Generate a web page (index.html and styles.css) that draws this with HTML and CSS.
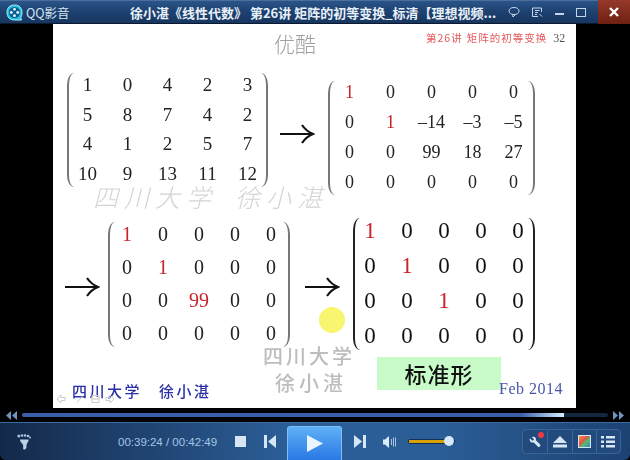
FILE: index.html
```html
<!DOCTYPE html>
<html lang="zh-CN">
<head>
    <meta charset="UTF-8">
    <title>QQ影音</title>
    <link rel="stylesheet" href="styles.css">
</head>
<body>

<div class="player">

    <!-- Title bar -->
    <header class="titlebar">
        <div class="brand">
            <svg class="logo" width="17" height="17" viewBox="0 0 17 17">
                <path d="M8.500 1C3.500 1 1 4 1 8.500S3.500 16 8.500 16H15.500L14.800 13.500C15.700 12 16 10.500 16 8.500 16 4 13.500 1 8.500 1Z" fill="#1fc0e0" stroke="#a8ecf8"/>
                <circle cx="8.500" cy="8.500" r="5.500" fill="#0a5a90"/>
                <circle cx="8.500" cy="5.300" r="1.400" fill="#e6fbff"/>
                <circle cx="8.500" cy="11.700" r="1.400" fill="#e6fbff"/>
                <circle cx="5.300" cy="8.500" r="1.400" fill="#e6fbff"/>
                <circle cx="11.700" cy="8.500" r="1.400" fill="#e6fbff"/>
            </svg>
            <span>QQ影音</span>
        </div>
        <div class="title">徐小湛《线性代数》 第26讲 矩阵的初等变换_标清【理想视频...</div>
        <div class="winbtns">
            <svg width="14" height="14" viewBox="0 0 14 14"><path d="M7 2.500C3.800 2.500 2 4 2 6S3.800 9.500 7 9.500 12 8 12 6 10.200 2.500 7 2.500ZM5.500 9.500 6 12 8.500 9.500" fill="none" stroke="#c4d6ea"/></svg>
            <svg width="14" height="14" viewBox="0 0 14 14"><path d="M2.500 3H11.500V7M2.500 3V11.500H8M5 5.500H9.500M5 7.500H8M5 9.500H7M9.500 9 12 11.500" fill="none" stroke="#c4d6ea"/></svg>
            <span class="btn-min"></span>
            <span class="btn-max"></span>
            <span class="btn-close">
                <svg width="12" height="12" viewBox="0 0 12 12"><path d="M2 2 10 10M10 2 2 10" stroke="#fff" stroke-width="2.400"/></svg>
            </span>
        </div>
    </header>

    <!-- Video frame -->
    <main class="video">
        <div class="slide">
            <div class="youku">优酷</div>
            <div class="page-head"><span>第26讲</span><span>矩阵的初等变换</span><b>32</b></div>

            <div class="matrix m1">
                <span>1</span><span>0</span><span>4</span><span>2</span><span>3</span>
                <span>5</span><span>8</span><span>7</span><span>4</span><span>2</span>
                <span>4</span><span>1</span><span>2</span><span>5</span><span>7</span>
                <span>10</span><span>9</span><span>13</span><span>11</span><span>12</span>
            </div>

            <svg class="arrow a1" width="36" height="24" viewBox="0 0 36 24"><path d="M1 12H34M23 3Q27 9 34 12 27 15 23 21" fill="none" stroke="#111" stroke-width="2.200"/></svg>

            <div class="matrix m2">
                <span class="red">1</span><span>0</span><span>0</span><span>0</span><span>0</span>
                <span>0</span><span class="red">1</span><span>–14</span><span>–3</span><span>–5</span>
                <span>0</span><span>0</span><span>99</span><span>18</span><span>27</span>
                <span>0</span><span>0</span><span>0</span><span>0</span><span>0</span>
            </div>

            <div class="mark mark-wide"><span>四川大学</span><span>徐小湛</span></div>

            <svg class="arrow a2" width="36" height="24" viewBox="0 0 36 24"><path d="M1 12H34M23 3Q27 9 34 12 27 15 23 21" fill="none" stroke="#111" stroke-width="2.200"/></svg>

            <div class="matrix m3">
                <span class="red">1</span><span>0</span><span>0</span><span>0</span><span>0</span>
                <span>0</span><span class="red">1</span><span>0</span><span>0</span><span>0</span>
                <span>0</span><span>0</span><span class="red">99</span><span>0</span><span>0</span>
                <span>0</span><span>0</span><span>0</span><span>0</span><span>0</span>
            </div>

            <svg class="arrow a3" width="36" height="24" viewBox="0 0 36 24"><path d="M1 12H34M23 3Q27 9 34 12 27 15 23 21" fill="none" stroke="#111" stroke-width="2.200"/></svg>

            <div class="cursor-dot"></div>

            <div class="matrix m4">
                <span class="red">1</span><span>0</span><span>0</span><span>0</span><span>0</span>
                <span>0</span><span class="red">1</span><span>0</span><span>0</span><span>0</span>
                <span>0</span><span>0</span><span class="red">1</span><span>0</span><span>0</span>
                <span>0</span><span>0</span><span>0</span><span>0</span><span>0</span>
            </div>

            <div class="mark mark-a">四川大学</div>
            <div class="mark mark-b">徐小湛</div>

            <div class="normal-form">标准形</div>
            <div class="author"><span>四川大学</span><span>徐小湛</span></div>
            <div class="date">Feb 2014</div>

            <svg class="slide-nav" width="58" height="10" viewBox="0 0 58 10">
                <path d="M1 5 5 1V3.500H9V6.500H5V9ZM21 8.500 27 1.500M36 1.500H43V8.500H36ZM36 5H43M50 3.500H54V1L58 5 54 9V6.500H50Z" fill="none" stroke="#c9c9c9"/>
            </svg>
        </div>
    </main>

    <!-- Seek row -->
    <div class="seek">
        <svg width="11" height="9" viewBox="0 0 11 9"><path d="M5 0V9L0 4.500ZM11 0V9L6 4.500Z" fill="#6f93bf"/></svg>
        <div class="seek-track"><div class="seek-fill"></div></div>
        <svg width="11" height="9" viewBox="0 0 11 9"><path d="M0 0V9L5 4.500ZM6 0V9L11 4.500Z" fill="#6f93bf"/></svg>
    </div>

    <!-- Control bar -->
    <footer class="controls">
        <svg class="foot" width="14" height="16" viewBox="0 0 14 16">
            <circle cx="1.800" cy="2" r="1.500" fill="#a9c2dc"/><circle cx="5" cy="1.500" r="1.300" fill="#a9c2dc"/><circle cx="8" cy="1.500" r="1.300" fill="#a9c2dc"/><circle cx="11" cy="2" r="1.300" fill="#a9c2dc"/><circle cx="13" cy="3.500" r="1" fill="#a9c2dc"/>
            <path d="M3 5.500H11.500C12 8 9.500 9 9.500 12 9.500 15 8 16 6.800 15.500 5.500 15 7 12.500 5.500 10 4.500 8.500 3 8 3 5.500Z" fill="#b9d0e6"/>
        </svg>
        <div class="time">00:39:24 / 00:42:49</div>
        <span class="stop"></span>
        <svg class="prev" width="12" height="13" viewBox="0 0 12 13"><path d="M0 0H3V13H0ZM12 0V13L4 6.500Z" fill="#d6e6f5"/></svg>
        <button class="play">
            <svg width="16" height="17" viewBox="0 0 16 17"><path d="M0 0 16 8.500 0 17Z" fill="#eaf5ff"/></svg>
        </button>
        <svg class="next" width="12" height="13" viewBox="0 0 12 13"><path d="M0 0 8 6.500 0 13ZM9 0H12V13H9Z" fill="#d6e6f5"/></svg>
        <svg class="vol" width="14" height="12" viewBox="0 0 14 12"><path d="M0 3.500H2L6 0V12L2 8.500H0Z" fill="#dcebf8"/><path d="M8.500 3V9M10.500 1.500V10.500M12.500 1.500V10.500" stroke="#a8c2dc"/></svg>
        <div class="volume"><div class="volume-fill"></div><span class="knob"></span></div>
        <div class="tools">
            <div class="tool badge">
                <svg width="12" height="12" viewBox="0 0 14 13"><path d="M1 2 4 5 6 3.500 3.500 1C6 -.5 9 1.500 8 4.500L13 9.500C14 11.500 12 13 10.500 12L5.500 7C3 8 0 5.500 1 2Z" fill="#d6e6f5"/></svg>
            </div>
            <div class="tool">
                <svg width="14" height="12" viewBox="0 0 14 12"><path d="M7 0 14 7H0ZM0 8.500H14V11.500H0Z" fill="#d6e6f5"/></svg>
            </div>
            <div class="tool"><span class="palette"></span></div>
            <div class="tool">
                <svg width="14" height="12" viewBox="0 0 14 12"><path d="M0 0H3V2.500H0ZM5 0H14V2.500H5ZM0 4.500H3V7H0ZM5 4.500H14V7H5ZM0 9H3V11.500H0ZM5 9H14V11.500H5Z" fill="#d6e6f5"/></svg>
            </div>
        </div>
    </footer>
</div>

</body>
</html>
```

FILE: styles.css
```css
* {
    box-sizing: border-box;
}

html, body {
    margin: 0;
    width: 630px;
    height: 460px;
    overflow: hidden;
    background: #000;
}

.player {
    display: flex;
    flex-direction: column;
    width: 630px;
    height: 460px;
    font-family: "Noto Sans CJK SC", "Liberation Sans", sans-serif;
}

/* Title bar */
.titlebar {
    display: flex;
    align-items: center;
    height: 24px;
    flex: none;
    color: #fff;
    background: linear-gradient(#2a5488, #1d4272 45%, #17365f);
    border-top: 1px solid #4a6f9c;
    border-bottom: 1px solid #0a1a30;
}

.brand {
    display: flex;
    align-items: center;
    gap: 3px;
    width: 130px;
    padding-left: 6px;
    font-size: 12.500px;
    color: #d5e4f2;
}

.title {
    flex: 1;
    font-size: 13px;
    font-weight: 700;
    white-space: nowrap;
    overflow: hidden;
    color: #e8f0f8;
}

.winbtns {
    display: flex;
    align-items: center;
    gap: 9px;
    height: 100%;
}

.btn-min {
    width: 9px;
    height: 2px;
    margin: 4px 0 0 2px;
    background: #c4d6ea;
}

.btn-max {
    width: 10px;
    height: 9px;
    margin: 0 3px 0 3px;
    border: 1px solid #c4d6ea;
}

.btn-close {
    display: flex;
    align-items: center;
    justify-content: center;
    width: 32px;
    height: 24px;
    margin-top: -1px;
    background: linear-gradient(#96392a, #6d2012);
}

/* Video frame */
.video {
    flex: 1;
    display: flex;
    justify-content: flex-start;
    padding-left: 53px;
    background: #000;
}

.slide {
    position: relative;
    width: 523px;
    height: 384px;
    background: #fff;
    overflow: hidden;
    filter: blur(.45px);
}

.slide > * {
    position: absolute;
}

.youku {
    left: 221px;
    top: 4px;
    font-size: 21px;
    font-weight: 300;
    line-height: 30px;
    color: #a0a0a0;
}

.page-head {
    left: 373px;
    top: 7px;
    display: flex;
    gap: 4px;
    font-size: 10.500px;
    line-height: 14px;
    letter-spacing: 1px;
    color: #e4595c;
    white-space: nowrap;
}

.page-head b {
    margin-left: 2px;
    font-family: "Liberation Serif", serif;
    font-size: 12px;
    font-weight: 400;
    letter-spacing: 0;
    color: #555;
}

/* Matrices: the curved borders are the parentheses */
.matrix {
    display: grid;
    place-items: center;
    justify-content: center;
    align-content: center;
    padding-bottom: 2px;
    font-family: "Liberation Serif", serif;
    line-height: 1;
    color: #222;
}

.matrix::before,
.matrix::after {
    content: "";
    position: absolute;
    top: 0;
    bottom: 0;
    width: 12px;
    border: 2px solid #777;
    border-top: 0;
    border-bottom: 0;
}

.matrix::before {
    left: 0;
    border-right: 0;
    border-radius: 12px / 20px;
}

.matrix::after {
    right: 0;
    border-left: 0;
    border-radius: 12px / 20px;
}

.matrix .red {
    color: #c8232a;
}

.m1 {
    left: 14px;
    top: 49px;
    width: 201px;
    height: 114px;
    grid-template-columns: repeat(5, 40px);
    grid-template-rows: repeat(4, 29.500px);
    font-size: 19px;
}

.m2 {
    left: 275px;
    top: 57px;
    width: 207px;
    height: 114px;
    grid-template-columns: repeat(5, 41px);
    grid-template-rows: repeat(4, 30px);
    font-size: 18px;
}

.m3 {
    left: 55px;
    top: 198px;
    width: 182px;
    height: 125px;
    grid-template-columns: repeat(5, 36px);
    grid-template-rows: repeat(4, 33px);
    font-size: 20px;
}

.m4 {
    left: 300px;
    top: 194px;
    width: 182px;
    height: 132px;
    grid-template-columns: repeat(5, 37px);
    grid-template-rows: repeat(4, 35px);
    font-size: 23px;
    color: #111;
}

.m4::before,
.m4::after {
    border-color: #222;
}

.a1 {
    left: 226px;
    top: 98px;
}

.a2 {
    left: 11px;
    top: 251px;
}

.a3 {
    left: 251px;
    top: 251px;
}

.cursor-dot {
    left: 266px;
    top: 283px;
    width: 26px;
    height: 26px;
    border-radius: 50%;
    background: #f8f570;
}

/* Watermarks and captions */
.mark {
    font-weight: 500;
    color: #bdbdbd;
    white-space: nowrap;
}

.mark-wide {
    left: 40px;
    top: 160px;
    display: flex;
    gap: 18px;
    font-size: 25px;
    font-style: italic;
    font-weight: 300;
    line-height: 25px;
    letter-spacing: 6px;
    color: #d4d4d4;
}

.mark-a {
    left: 210px;
    top: 320px;
    font-size: 20px;
    line-height: 24px;
    letter-spacing: 3px;
}

.mark-b {
    left: 222px;
    top: 347px;
    font-size: 20px;
    line-height: 24px;
    letter-spacing: 4px;
}

.normal-form {
    left: 324px;
    top: 333px;
    width: 124px;
    height: 33px;
    font-size: 22px;
    font-weight: 500;
    line-height: 33px;
    letter-spacing: 1px;
    text-align: center;
    color: #111;
    background: #c8fbc8;
}

.author {
    left: 19px;
    top: 356px;
    display: flex;
    gap: 17px;
    font-size: 15px;
    font-weight: 500;
    line-height: 22px;
    letter-spacing: 2.500px;
    color: #2a2fa8;
    white-space: nowrap;
}

.date {
    left: 446px;
    top: 355px;
    font-family: "Liberation Serif", serif;
    font-size: 16px;
    line-height: 20px;
    letter-spacing: .5px;
    color: #4a55a8;
    white-space: nowrap;
}

.slide-nav {
    left: 3px;
    top: 370px;
}

/* Seek row */
.seek {
    display: flex;
    align-items: center;
    gap: 5px;
    height: 14px;
    flex: none;
    padding: 0 6px;
    background: #000;
}

.seek-track {
    flex: 1;
    height: 4px;
    background: #12263e;
    border-radius: 2px;
}

.seek-fill {
    width: 92.500%;
    height: 100%;
    border-radius: 2px 0 0 2px;
    background: linear-gradient(90deg, #3a5ea8 92%, #d8f2ff);
}

/* Control bar */
.controls {
    display: flex;
    align-items: center;
    height: 38px;
    flex: none;
    padding: 0 9px 0 17px;
    border-top: 1px solid #3a6ba3;
    border-radius: 0 0 6px 6px;
    background: linear-gradient(90deg, #14294a, #2b5d96 45%, #2b5d96 70%, #1c4272);
}

.time {
    width: 101px;
    margin-left: 87px;
    font-family: "Liberation Sans", sans-serif;
    font-size: 11.500px;
    color: #a5c6e6;
    white-space: nowrap;
}

.stop {
    width: 11px;
    height: 11px;
    margin-left: 16px;
    background: #d6e6f5;
}

.prev {
    margin-left: 18px;
}

.play {
    display: flex;
    align-items: center;
    justify-content: center;
    width: 55px;
    height: 34px;
    margin: 3px 0 0 11px;
    padding: 0;
    border: 1px solid #7cc0f5;
    border-bottom: 0;
    border-radius: 3px 3px 0 0;
    background: linear-gradient(#5eb0f6, #2a78e4);
}

.next {
    margin-left: 12px;
}

.vol {
    margin-left: 17px;
}

.volume {
    position: relative;
    width: 47px;
    height: 5px;
    margin-left: 11px;
    border: 1px solid #12305a;
    border-radius: 2px;
    background: #0f2a4a;
}

.volume-fill {
    width: 38px;
    height: 100%;
    background: #d8a000;
}

.knob {
    position: absolute;
    right: 0;
    top: -4px;
    width: 10px;
    height: 10px;
    border-radius: 50%;
    background: #d6e8f8;
}

.tools {
    display: flex;
    height: 25px;
    margin-left: auto;
    border: 1px solid #3a6496;
    border-radius: 4px;
    background: #234a7c;
}

.tool {
    position: relative;
    display: flex;
    align-items: center;
    justify-content: center;
    width: 24.250px;
    border-left: 1px solid #3a6496;
}

.tool:first-child {
    border-left: 0;
}

.badge::after {
    content: "";
    position: absolute;
    right: 3px;
    top: 2px;
    width: 6px;
    height: 6px;
    border-radius: 50%;
    background: #f03a44;
}

.palette {
    width: 13px;
    height: 13px;
    border: 1px solid #d6e6f5;
    background: linear-gradient(135deg, #e8a030, #e85050 40%, #50c060 60%, #4080e0);
}
```
